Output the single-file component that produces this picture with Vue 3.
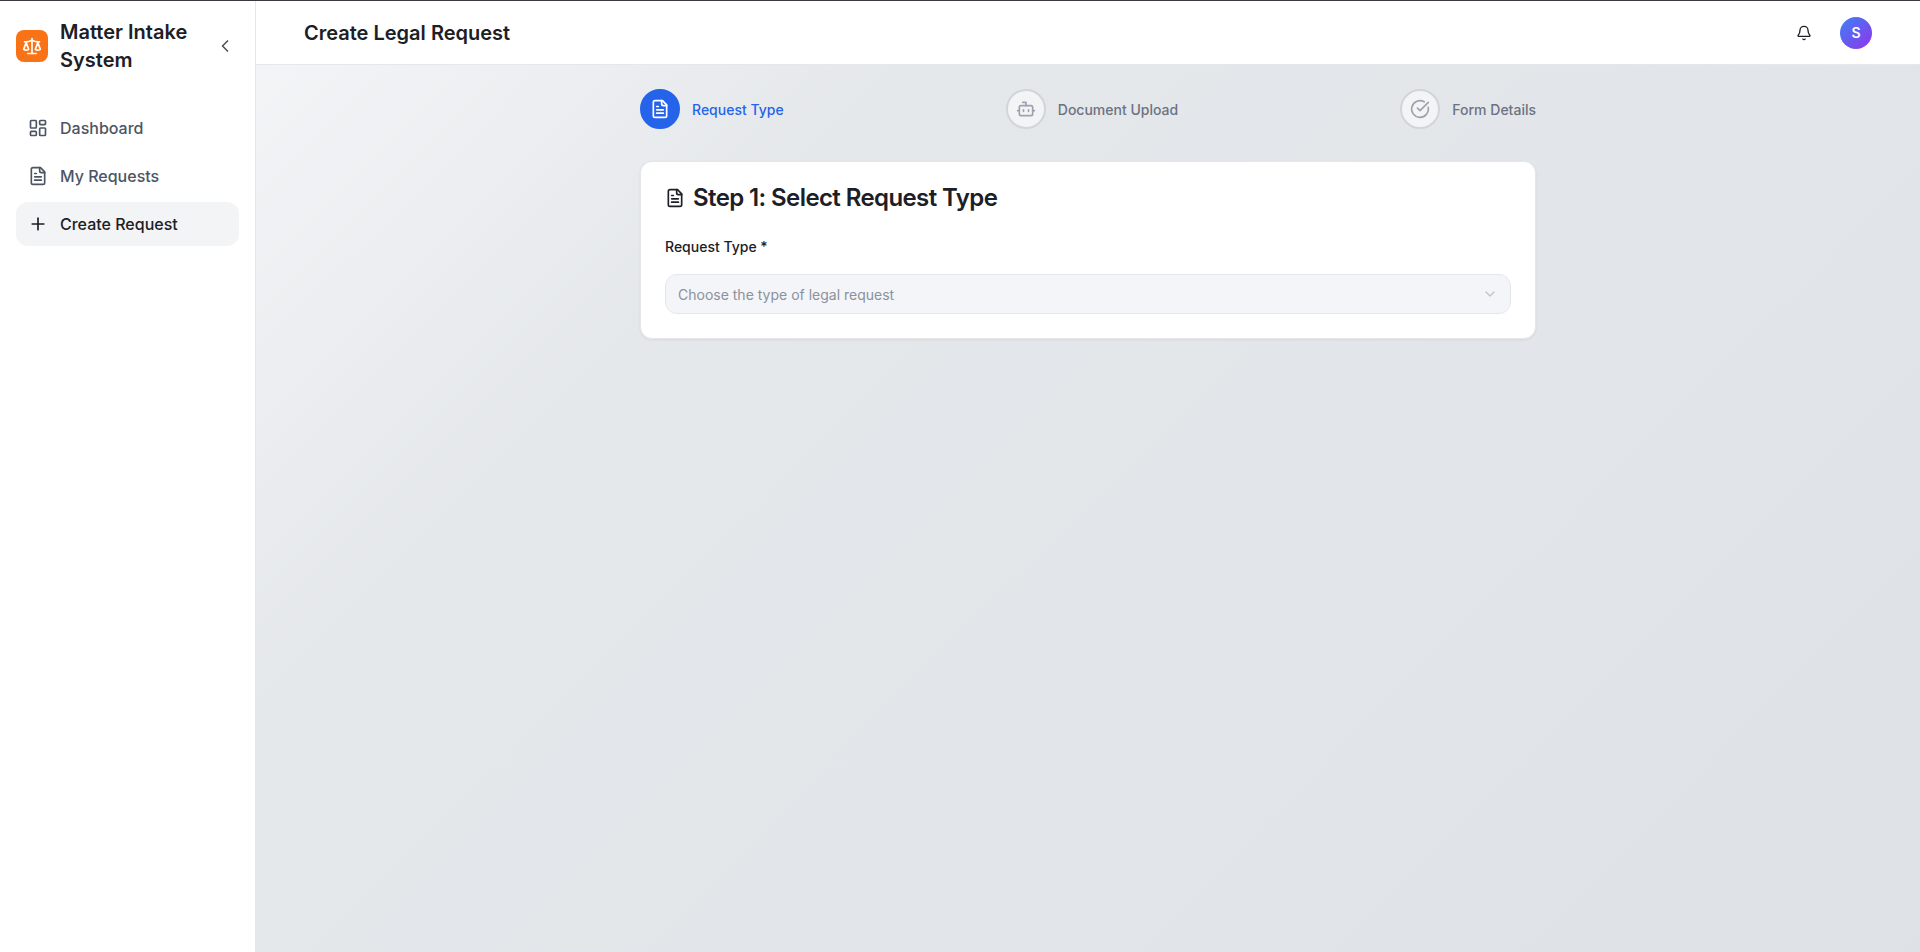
<script setup>
const navItems = [
  { label: 'Dashboard', icon: 'grid' },
  { label: 'My Requests', icon: 'file' },
  { label: 'Create Request', icon: 'plus', active: true }
]

const steps = [
  { label: 'Request Type', icon: 'file', active: true },
  { label: 'Document Upload', icon: 'bot' },
  { label: 'Form Details', icon: 'check' }
]
</script>

<template>
  <div class="app">
    <aside class="sidebar">
      <div class="brand">
        <div class="logo">
          <svg width="20" height="20" viewBox="0 0 24 24" fill="none" stroke="currentColor" stroke-width="2" stroke-linecap="round" stroke-linejoin="round">
            <path d="m16 16 3-8 3 8c-.87.65-1.92 1-3 1s-2.13-.35-3-1Z" />
            <path d="m2 16 3-8 3 8c-.87.65-1.92 1-3 1s-2.13-.35-3-1Z" />
            <path d="M7 21h10" />
            <path d="M12 3v18" />
            <path d="M3 7h2c2 0 5-1 7-2 2 1 5 2 7 2h2" />
          </svg>
        </div>
        <div class="brand-name">Matter Intake System</div>
        <svg class="collapse" width="20" height="20" viewBox="0 0 24 24" fill="none" stroke="currentColor" stroke-width="2" stroke-linecap="round" stroke-linejoin="round">
          <path d="m15 18-6-6 6-6" />
        </svg>
      </div>
      <nav class="nav">
        <a v-for="item in navItems" :key="item.label" class="nav-item" :class="{ active: item.active }">
          <svg width="20" height="20" viewBox="0 0 24 24" fill="none" stroke="currentColor" stroke-width="2" stroke-linecap="round" stroke-linejoin="round">
            <template v-if="item.icon === 'grid'">
              <rect width="7" height="9" x="3" y="3" rx="1" />
              <rect width="7" height="5" x="14" y="3" rx="1" />
              <rect width="7" height="9" x="14" y="12" rx="1" />
              <rect width="7" height="5" x="3" y="16" rx="1" />
            </template>
            <template v-else-if="item.icon === 'file'">
              <path d="M15 2H6a2 2 0 0 0-2 2v16a2 2 0 0 0 2 2h12a2 2 0 0 0 2-2V7Z" />
              <path d="M14 2v4a2 2 0 0 0 2 2h4" />
              <path d="M10 9H8" />
              <path d="M16 13H8" />
              <path d="M16 17H8" />
            </template>
            <template v-else>
              <path d="M5 12h14" />
              <path d="M12 5v14" />
            </template>
          </svg>
          <span>{{ item.label }}</span>
        </a>
      </nav>
    </aside>

    <div class="content">
      <header class="topbar">
        <h1>Create Legal Request</h1>
        <div class="topbar-right">
          <svg class="bell" width="16" height="16" viewBox="0 0 24 24" fill="none" stroke="currentColor" stroke-width="2" stroke-linecap="round" stroke-linejoin="round">
            <path d="M10.268 21a2 2 0 0 0 3.464 0" />
            <path d="M3.262 15.326A1 1 0 0 0 4 17h16a1 1 0 0 0 .74-1.673C19.41 13.956 18 12.499 18 8A6 6 0 0 0 6 8c0 4.499-1.411 5.956-2.738 7.326" />
          </svg>
          <div class="avatar">S</div>
        </div>
      </header>

      <main class="main">
        <div class="wrap">
          <div class="steps">
            <div v-for="step in steps" :key="step.label" class="step" :class="{ active: step.active }">
              <div class="step-circle">
                <svg width="20" height="20" viewBox="0 0 24 24" fill="none" stroke="currentColor" stroke-width="2" stroke-linecap="round" stroke-linejoin="round">
                  <template v-if="step.icon === 'file'">
                    <path d="M15 2H6a2 2 0 0 0-2 2v16a2 2 0 0 0 2 2h12a2 2 0 0 0 2-2V7Z" />
                    <path d="M14 2v4a2 2 0 0 0 2 2h4" />
                    <path d="M10 9H8" />
                    <path d="M16 13H8" />
                    <path d="M16 17H8" />
                  </template>
                  <template v-else-if="step.icon === 'bot'">
                    <path d="M12 8V4H8" />
                    <rect width="16" height="12" x="4" y="8" rx="2" />
                    <path d="M2 14h2" />
                    <path d="M20 14h2" />
                    <path d="M15 13v2" />
                    <path d="M9 13v2" />
                  </template>
                  <template v-else>
                    <path d="M21.801 10A10 10 0 1 1 17 3.335" />
                    <path d="m9 11 3 3L22 4" />
                  </template>
                </svg>
              </div>
              <span class="step-label">{{ step.label }}</span>
            </div>
          </div>

          <section class="card">
            <h2>
              <svg width="20" height="20" viewBox="0 0 24 24" fill="none" stroke="currentColor" stroke-width="2" stroke-linecap="round" stroke-linejoin="round">
                <path d="M15 2H6a2 2 0 0 0-2 2v16a2 2 0 0 0 2 2h12a2 2 0 0 0 2-2V7Z" />
                <path d="M14 2v4a2 2 0 0 0 2 2h4" />
                <path d="M10 9H8" />
                <path d="M16 13H8" />
                <path d="M16 17H8" />
              </svg>
              Step 1: Select Request Type
            </h2>
            <label class="field-label">Request Type *</label>
            <div class="select">
              <span>Choose the type of legal request</span>
              <svg width="16" height="16" viewBox="0 0 24 24" fill="none" stroke="currentColor" stroke-width="2" stroke-linecap="round" stroke-linejoin="round">
                <path d="m6 9 6 6 6-6" />
              </svg>
            </div>
          </section>
        </div>
      </main>
    </div>
  </div>
</template>

<style scoped>
.app {
  display: flex;
  height: 952px;
  box-sizing: border-box;
  border-top: 1px solid #3d383f;
  font-family: Inter, "Liberation Sans", sans-serif;
  color: #1c2026;
  overflow: hidden;
}

.sidebar {
  width: 256px;
  flex-shrink: 0;
  box-sizing: border-box;
  background: #fff;
  border-right: 1px solid #e5e7eb;
  padding: 15px 16px 16px;
}

.brand {
  display: flex;
  align-items: center;
  gap: 12px;
  height: 60px;
  margin-bottom: 30px;
}

.logo {
  width: 32px;
  height: 32px;
  flex-shrink: 0;
  border-radius: 8px;
  background: #f97316;
  color: #fff;
  display: flex;
  align-items: center;
  justify-content: center;
}

.brand-name {
  font-size: 20px;
  line-height: 28px;
  font-weight: 600;
  width: 140px;
}

.collapse {
  color: #4b5563;
  margin-left: auto;
  margin-right: 4px;
}

.nav {
  display: flex;
  flex-direction: column;
  gap: 4px;
}

.nav-item {
  display: flex;
  align-items: center;
  gap: 12px;
  height: 44px;
  padding: 0 12px;
  border-radius: 12px;
  font-size: 16px;
  font-weight: 500;
  color: #4b5563;
}

.nav-item.active {
  background: #f3f4f6;
  color: #1c2026;
}

.content {
  flex: 1;
  display: flex;
  flex-direction: column;
  min-width: 0;
}

.topbar {
  height: 64px;
  flex-shrink: 0;
  box-sizing: border-box;
  background: #fff;
  border-bottom: 1px solid #e5e7eb;
  display: flex;
  align-items: center;
  justify-content: space-between;
  padding: 0 48px;
}

.topbar h1 {
  margin: 0;
  font-size: 20px;
  font-weight: 600;
}

.topbar-right {
  display: flex;
  align-items: center;
  gap: 28px;
}

.avatar {
  width: 32px;
  height: 32px;
  border-radius: 50%;
  background: linear-gradient(135deg, #3b82f6, #9333ea);
  color: #fff;
  font-size: 14px;
  font-weight: 600;
  display: flex;
  align-items: center;
  justify-content: center;
}

.main {
  flex: 1;
  background: linear-gradient(135deg, #f3f4f6 0%, #e5e8eb 25%, #e2e5e9 60%, #dee1e6 100%);
  padding-top: 24px;
}

.wrap {
  width: 896px;
  margin: 0 auto;
}

.steps {
  display: flex;
  justify-content: space-between;
  margin-bottom: 32px;
}

.step {
  display: flex;
  align-items: center;
  gap: 12px;
  color: #6b7280;
}

.step-circle {
  width: 40px;
  height: 40px;
  box-sizing: border-box;
  border-radius: 50%;
  border: 2px solid #d1d5db;
  background: #f3f4f6;
  color: #9ca3af;
  display: flex;
  align-items: center;
  justify-content: center;
}

.step.active {
  color: #2563eb;
}

.step.active .step-circle {
  background: #2563eb;
  border-color: #2563eb;
  color: #fff;
}

.step-label {
  font-size: 14px;
  font-weight: 500;
}

.card {
  background: #fff;
  border: 1px solid #e4e6ea;
  border-radius: 12px;
  padding: 20px 24px 24px;
  box-shadow: 0 1px 3px rgba(0, 0, 0, 0.06);
}

.card h2 {
  margin: 0 0 23px;
  display: flex;
  align-items: center;
  gap: 8px;
  font-size: 24px;
  line-height: 32px;
  font-weight: 600;
  letter-spacing: -0.6px;
}

.field-label {
  display: block;
  font-size: 14px;
  line-height: 20px;
  font-weight: 500;
  margin-bottom: 17px;
}

.select {
  height: 40px;
  box-sizing: border-box;
  display: flex;
  align-items: center;
  justify-content: space-between;
  padding: 0 12px;
  border: 1px solid #e5e7eb;
  border-radius: 12px;
  background: #f4f5f8;
  color: #8b919d;
  font-size: 14px;
}

.select svg {
  color: #c0c4cc;
}
</style>
